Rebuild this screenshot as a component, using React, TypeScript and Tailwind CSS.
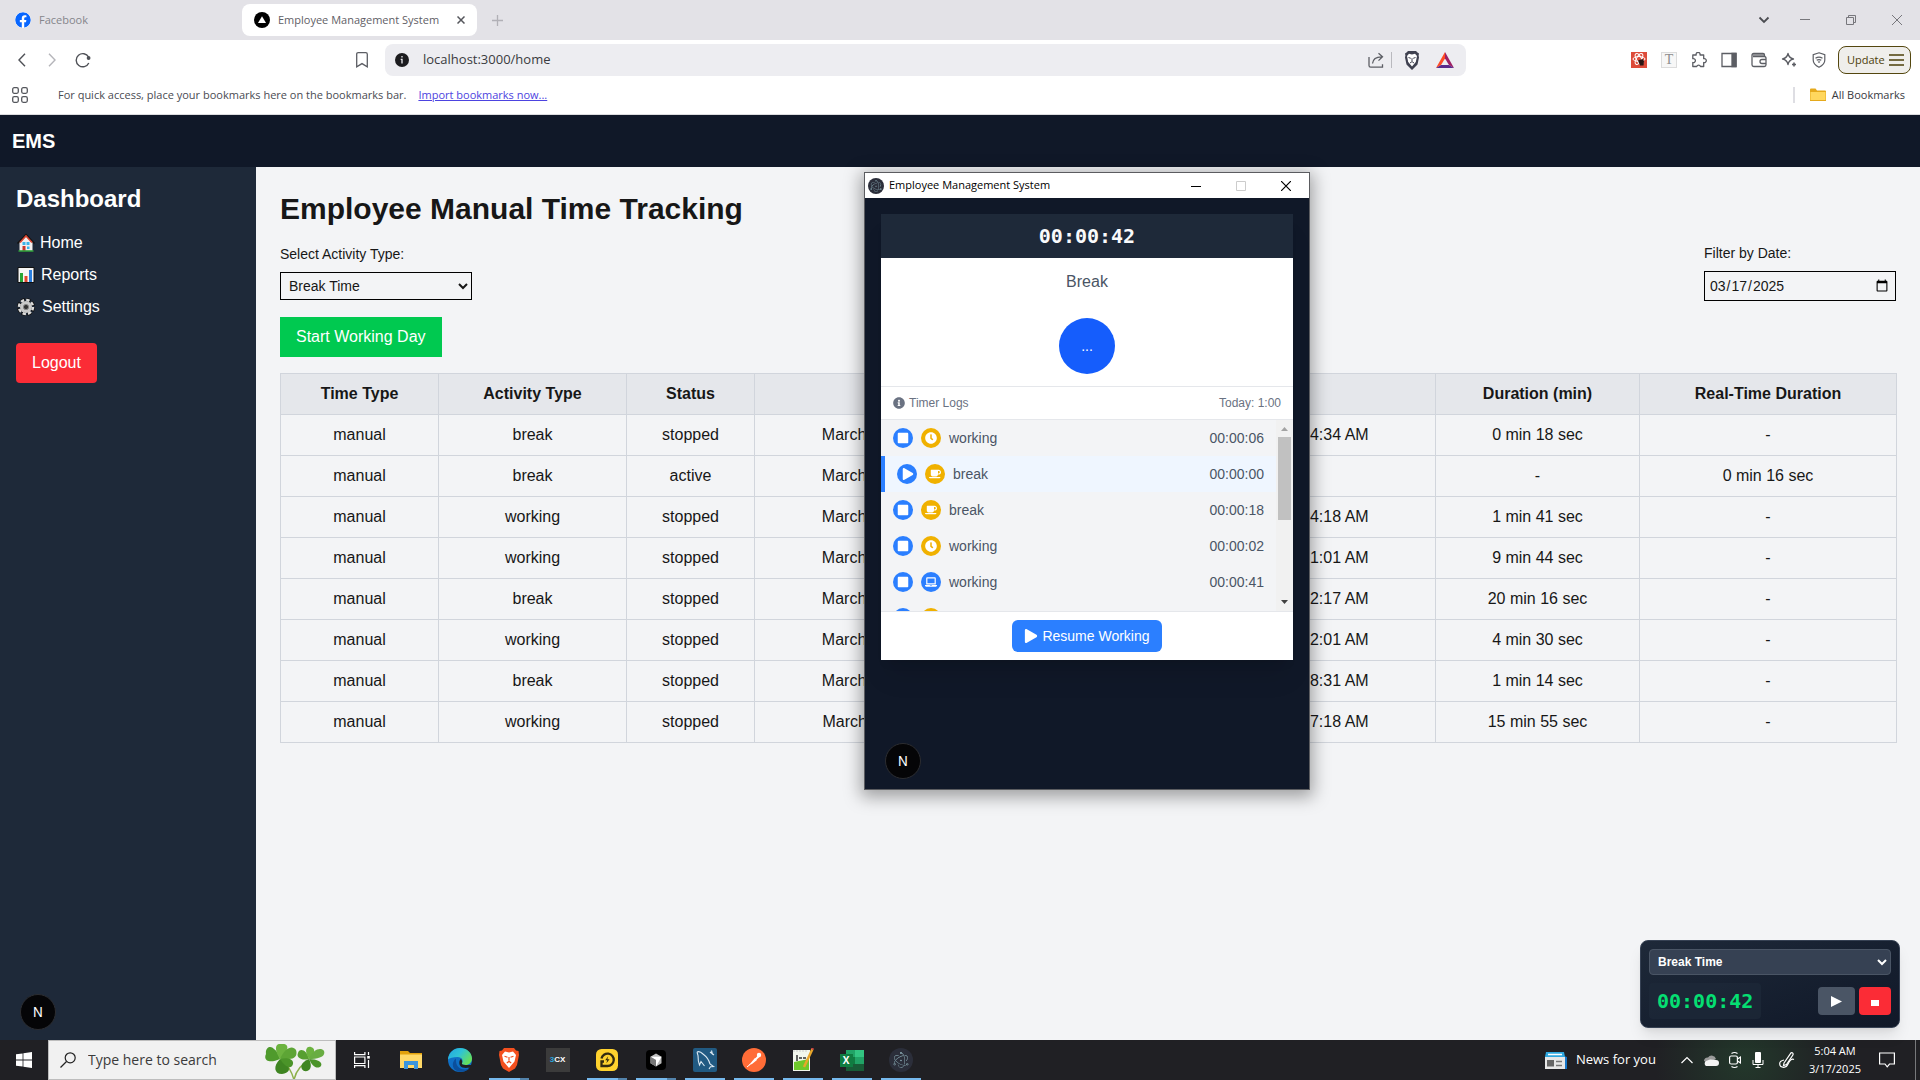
import React from "react";
import {
  FaCoffee,
  FaClock,
  FaFacebook,
  FaInfoCircle,
  FaLaptop,
  FaPlay,
  FaStop,
} from "react-icons/fa";
import { SiElectron } from "react-icons/si";

/* ---------- browser chrome ---------- */

function TabStrip() {
  return (
    <div className="flex h-10 items-center bg-[#e3e2e7] text-[11px] text-[#5f6066]">
      <button className="ml-[15px] flex w-[227px] items-center gap-2 text-[#85858b]">
        <FaFacebook className="size-4 rounded-full bg-white text-[#0866ff]" />
        Facebook
      </button>
      <div className="flex h-8 w-[235px] items-center gap-2 rounded-lg bg-white pl-3 pr-2">
        <svg viewBox="0 0 16 16" className="size-4 shrink-0">
          <circle cx="8" cy="8" r="8" fill="#000" />
          <path d="M8 4.2 12 11H4Z" fill="#fff" />
        </svg>
        <span className="grow whitespace-nowrap">Employee Management System</span>
        <button aria-label="Close tab" className="p-1">
          <svg viewBox="0 0 8 8" className="size-2" fill="none" stroke="#55565c" strokeWidth="1.5">
            <path d="M.5.5l7 7M7.5.5l-7 7" />
          </svg>
        </button>
      </div>
      <button aria-label="New tab" className="ml-[15px]">
        <svg viewBox="0 0 11 11" className="size-[11px]" stroke="#b1b0b6" strokeWidth="1.3">
          <path d="M5.5 0v11M0 5.5h11" />
        </svg>
      </button>
      <div className="ml-auto flex items-center text-[#77777c]">
        <button aria-label="Search tabs" className="flex w-9 justify-center">
          <svg viewBox="0 0 12 8" className="h-2 w-3" fill="none" stroke="#4b4c51" strokeWidth="1.8">
            <path d="M1.5 1.5 6 6l4.500-4.500" />
          </svg>
        </button>
        <button aria-label="Minimize" className="flex w-[46px] justify-center">
          <svg viewBox="0 0 10 10" className="size-[10px]" stroke="currentColor">
            <path d="M0 4.500h10" />
          </svg>
        </button>
        <button aria-label="Restore" className="flex w-[46px] justify-center">
          <svg viewBox="0 0 10 10" className="size-[10px]" fill="none" stroke="currentColor">
            <path d="M.5 2.500h7v7h-7zM2.500 2.500v-2h7v7h-2" />
          </svg>
        </button>
        <button aria-label="Close" className="flex w-[46px] justify-center">
          <svg viewBox="0 0 10 10" className="size-[10px]" stroke="currentColor">
            <path d="M0 0l10 10M10 0 0 10" />
          </svg>
        </button>
      </div>
    </div>
  );
}

function ShieldLion() {
  return (
    <svg viewBox="0 0 16 19" className="h-[19px] w-4">
      <path d="M4 0h8l1.500 1.500 1.500 1-.4 2L15 6.500l-1.500 7L8 19l-5.500-5.500L1 6.500l.4-2-.4-2 1.500-1Z" fill="#3f4150" />
      <path d="M3 5 5 2.800l3 .7 3-.7L13 5l-1.200 6L8 15.500 4.200 11Z" fill="#fff" />
      <path d="M4.500 6.500l2.300.8M11.500 6.500l-2.300.8M8 7.200v3M6 12l2-1.400 2 1.400" stroke="#3f4150" fill="none" />
    </svg>
  );
}

function Toolbar() {
  return (
    <div className="flex h-10 items-center bg-white">
      <div className="ml-[15px] flex items-center gap-4">
        <button aria-label="Back">
          <svg viewBox="0 0 12 14" className="h-[14px] w-[14px]" fill="none" stroke="#4f5157" strokeWidth="1.400">
            <path d="M9 .8 3 7l6 6.200" />
          </svg>
        </button>
        <button aria-label="Forward">
          <svg viewBox="0 0 12 14" className="h-[14px] w-[14px]" fill="none" stroke="#b5b5ba" strokeWidth="1.400">
            <path d="M3 .8 9 7l-6 6.200" />
          </svg>
        </button>
        <button aria-label="Reload">
          <svg viewBox="0 0 16 16" className="size-4" fill="none" stroke="#4f5157" strokeWidth="1.400">
            <path d="M13.600 5A6.600 6.600 0 1 0 13.800 11" />
            <circle cx="13.600" cy="6" r="1.900" fill="#4f5157" stroke="none" />
          </svg>
        </button>
      </div>
      <button aria-label="Bookmark this page" className="ml-[264px]">
        <svg viewBox="0 0 14 16" className="h-4 w-[14px]" fill="none" stroke="#5c5e64" strokeWidth="1.300">
          <path d="M1.700 2.200q0-1.500 1.500-1.500h7.600q1.500 0 1.500 1.500v12.600L7 11.600l-5.300 3.200Z" />
        </svg>
      </button>
      <div className="ml-4 flex h-8 w-[1081px] shrink items-center rounded-lg bg-[#ededf1] pl-[10px]">
        <svg viewBox="0 0 14 14" className="size-[14px] shrink-0">
          <circle cx="7" cy="7" r="7" fill="#1c1c1f" />
          <path d="M7 3v1.500M5.700 6.300H7V10.500" stroke="#ededf1" strokeWidth="1.300" fill="none" />
        </svg>
        <input
          aria-label="Address"
          className="ml-[14px] min-w-0 grow bg-transparent text-[13px] text-[#3a3b40] outline-none"
          defaultValue="localhost:3000/home"
        />
        <button aria-label="Share" className="mr-[7px]">
          <svg viewBox="0 0 16 16" className="size-4" fill="none" stroke="#5c5e64" strokeWidth="1.300">
            <path d="M1 5v8.500q0 1.700 1.700 1.700H14.500v-3M4.500 11.500C5 7 8 4.800 13.500 4.800M10.500 1.200 14.500 4.800l-4 3.800" />
          </svg>
        </button>
        <span className="mr-3 h-4 w-px bg-[#b9b9be]" />
        <button aria-label="Brave Shields" className="mr-4">
          <ShieldLion />
        </button>
        <button aria-label="Brave Rewards" className="mr-3">
          <svg viewBox="0 0 18 16" className="h-4 w-[18px]">
            <path d="M9 0 0 16l5-3 4-6.500Z" fill="#ff4b24" />
            <path d="M9 0l9 16-5-3L9 6.500Z" fill="#9e1f63" />
            <path d="M0 16h18l-5-3H5Z" fill="#5b2a8c" />
          </svg>
        </button>
      </div>
      <div className="ml-auto mr-[9px] flex items-center">
        <div className="mr-[11px] flex items-center gap-[14px] text-[#5c5e64]">
          <button aria-label="React extension">
            <svg viewBox="0 0 16 16" className="size-4">
              <path d="M0 0h16v16H0z" fill="#dd4b39" />
              <g fill="none" stroke="#fff">
                <ellipse cx="8" cy="7" rx="6" ry="2.500" />
                <ellipse cx="8" cy="7" rx="6" ry="2.500" transform="rotate(60 8 7)" />
                <ellipse cx="8" cy="7" rx="6" ry="2.500" transform="rotate(120 8 7)" />
              </g>
              <path d="M7 8.500l4.500-1.500L13 9l-.5 4.500H9Z" fill="#2a1512" />
            </svg>
          </button>
          <button
            aria-label="Text extension"
            className="flex size-4 items-center justify-center border border-[#dcdcdc] bg-[#f7f7f7] font-['Liberation_Serif'] text-sm leading-none text-[#8d8d8d]"
          >
            T
          </button>
          <button aria-label="Extensions">
            <svg viewBox="0 0 16 16" className="size-4" fill="none" stroke="currentColor" strokeWidth="1.300">
              <path d="M1.800 3h3.400a2 2 0 1 1 3.800 0h3.700v3.700a2 2 0 1 1 0 3.800v4H9.500a2 2 0 0 0-3.800 0H1.800v-4a2 2 0 1 0 0-3.800Z" strokeLinejoin="round" />
            </svg>
          </button>
          <button aria-label="Sidebar">
            <svg viewBox="0 0 16 16" className="size-4" fill="none" stroke="currentColor" strokeWidth="1.300">
              <path d="M1 1.500h14v13H1z" />
              <path d="M11 1.500h4v13h-4z" fill="currentColor" />
            </svg>
          </button>
          <button aria-label="Wallet">
            <svg viewBox="0 0 16 16" className="size-4" fill="none" stroke="currentColor" strokeWidth="1.300">
              <path d="M1 3.200Q1 1.500 2.700 1.500H12q1.500 0 1.500 1.500v1.500H2.700M1 3v9.800q0 1.700 1.700 1.700h10.600q1.700 0 1.700-1.700V6.200q0-1.700-1.700-1.700H2" />
              <path d="M15 7.500h-4a2 2 0 0 0 0 4h4" />
              <path d="M1.500 3h12" strokeWidth="2" strokeOpacity=".6" />
            </svg>
          </button>
          <button aria-label="Leo AI">
            <svg viewBox="0 0 16 16" className="size-4" fill="none" stroke="currentColor" strokeWidth="1.300">
              <path d="M7 1.500c.7 3.500 2 4.800 5.500 5.500C9 7.700 7.700 9 7 12.500 6.300 9 5 7.700 1.500 7 5 6.300 6.300 5 7 1.500Z" strokeLinejoin="round" />
              <path d="M13 10.500v4M11 12.500h4" strokeWidth="1.600" />
            </svg>
          </button>
          <button aria-label="VPN">
            <svg viewBox="0 0 16 16" className="size-4" fill="none" stroke="currentColor" strokeWidth="1.200">
              <path d="M8 .8l5.800 2v5.200c0 3.500-2.500 5.700-5.800 7.300C4.700 13.700 2.200 11.500 2.200 8V2.800Z" />
              <path d="M4.500 6.200q3.500-2.300 7 0M5.700 8.300q2.300-1.500 4.600 0M7 10.200q1-.7 2 0" />
            </svg>
          </button>
        </div>
        <button className="flex h-7 w-[73px] items-center justify-between rounded-lg border border-[#54470f] bg-[#efeeeb] pl-2 pr-[6px] text-[11px] text-[#4d400a]">
          Update
          <svg viewBox="0 0 15 12" className="h-3 w-[15px]" stroke="#4d400a" strokeWidth="1.300">
            <path d="M0 1h15M0 6h15M0 11h15" />
          </svg>
        </button>
      </div>
    </div>
  );
}

function BookmarksBar() {
  return (
    <div className="flex h-[35px] items-center border-b border-[#dcdcdf] bg-white pb-1 text-[11px] text-[#4a4b52]">
      <button aria-label="Tab groups" className="ml-3">
        <svg viewBox="0 0 16 16" className="size-4" fill="none" stroke="#55575d" strokeWidth="1.300">
          <rect x=".7" y=".7" width="5.600" height="5.600" rx="1.500" />
          <rect x="9.700" y=".7" width="5.600" height="5.600" rx="1.500" />
          <rect x=".7" y="9.700" width="5.600" height="5.600" rx="1.500" />
          <rect x="9.700" y="9.700" width="5.600" height="5.600" rx="1.500" />
        </svg>
      </button>
      <span className="ml-[30px]">For quick access, place your bookmarks here on the bookmarks bar.</span>
      <a href="#import" className="ml-3 text-[#4c43e0] underline">
        Import bookmarks now...
      </a>
      <span className="ml-auto mr-[15px] h-4 w-[2px] bg-[#dedee3]" />
      <button className="mr-[15px] flex items-center gap-[6px] text-[#38393e]">
        <svg viewBox="0 0 16 14" className="h-[14px] w-4">
          <path d="M0 1.500Q0 .5 1 .5h4.500l1.500 2h8q1 0 1 1V13H0Z" fill="#e5a91c" />
          <path d="M.5 4h15v8H.5z" fill="#ffd75e" />
        </svg>
        All Bookmarks
      </button>
    </div>
  );
}

/* ---------- page ---------- */

function NextBadge() {
  return (
    <button
      aria-label="Open Next.js Dev Tools"
      className="flex size-9 items-center justify-center rounded-full border border-[#2c2d31] bg-[#050507] font-[Inter] text-[13px] leading-none text-white"
    >
      N
    </button>
  );
}

function Sidebar() {
  return (
    <aside className="flex w-64 shrink-0 flex-col items-start bg-[#1e2939] px-4 pb-[10px] pt-4 text-white">
      <h2 className="text-2xl font-bold">Dashboard</h2>
      <nav className="mt-4 flex flex-col gap-2">
        <a href="#home" className="flex items-center gap-1">
          <svg viewBox="0 0 20 20" className="size-5">
            <path d="M3.500 18V9L10 2l6.500 7v9Z" fill="#f4efee" />
            <path d="M1.500 10.500 10 1.500l8.500 9" fill="none" stroke="#111" strokeWidth="1.500" />
            <path d="M4 9.500 10 3l6 6.500" fill="none" stroke="#d8432f" strokeWidth="1.600" />
            <path d="M6.500 9h3v3h-3zM10.500 9h3v3h-3zM11 13.500h2.500V16H11z" fill="#3bb4e8" />
            <path d="M6.500 13h3v5h-3z" fill="#c8372a" />
            <path d="M2.500 18h15" stroke="#2f9e3a" strokeWidth="1.600" />
          </svg>
          Home
        </a>
        <a href="#reports" className="flex items-center gap-[5px]">
          <svg viewBox="0 0 20 20" className="size-5">
            <path d="M2 2.500h16v15H2z" fill="#f5f5f5" stroke="#111" />
            <path d="M4 8h3v9H4z" fill="#27a536" />
            <path d="M8.500 11h3v6h-3z" fill="#e2462f" />
            <path d="M13 5h3v12h-3z" fill="#2a7fe0" />
          </svg>
          Reports
        </a>
        <a href="#settings" className="flex items-center gap-[6px]">
          <svg viewBox="0 0 20 20" className="size-5">
            <circle cx="10" cy="10" r="7" fill="none" stroke="#111" strokeWidth="4" strokeDasharray="4.200 1.298" />
            <circle cx="10" cy="10" r="7" fill="none" stroke="#dcdcdc" strokeWidth="2.500" strokeDasharray="3.400 2.098" />
            <circle cx="10" cy="10" r="6" fill="#c9c9c9" />
            <circle cx="10" cy="10" r="2.600" fill="#333" stroke="#888" />
          </svg>
          Settings
        </a>
      </nav>
      <button className="mt-6 rounded bg-[#fb2c36] px-4 py-2">Logout</button>
      <div className="ml-1 mt-auto">
        <NextBadge />
      </div>
    </aside>
  );
}

const rows = [
  ["break", "stopped", "5:04:16 AM", "5:04:34 AM", "0 min 18 sec", "-"],
  ["break", "active", "5:04:34 AM", "", "-", "0 min 16 sec"],
  ["working", "stopped", "5:02:37 AM", "5:04:18 AM", "1 min 41 sec", "-"],
  ["working", "stopped", "4:51:17 AM", "5:01:01 AM", "9 min 44 sec", "-"],
  ["break", "stopped", "4:32:01 AM", "4:52:17 AM", "20 min 16 sec", "-"],
  ["working", "stopped", "4:27:31 AM", "4:32:01 AM", "4 min 30 sec", "-"],
  ["break", "stopped", "4:27:17 AM", "4:28:31 AM", "1 min 14 sec", "-"],
  ["working", "stopped", "4:11:23 AM", "4:27:18 AM", "15 min 55 sec", "-"],
];

const cell = "h-[41px] border border-[#d1d5dc] text-center";

function LogTable() {
  return (
    <table className="mt-4 w-full table-fixed border-collapse text-base">
      <colgroup>
        <col className="w-[158px]" />
        <col className="w-[188px]" />
        <col className="w-[128px]" />
        <col className="w-[341px]" />
        <col className="w-[340px]" />
        <col className="w-[204px]" />
        <col className="w-[257px]" />
      </colgroup>
      <thead>
        <tr className="bg-[#e5e7eb]">
          {["Time Type", "Activity Type", "Status", "Start Time", "End Time", "Duration (min)", "Real-Time Duration"].map((h) => (
            <th key={h} className={cell + " font-bold"}>
              {h}
            </th>
          ))}
        </tr>
      </thead>
      <tbody>
        {rows.map((r, i) => (
          <tr key={i}>
            <td className={cell}>manual</td>
            <td className={cell}>{r[0]}</td>
            <td className={cell}>{r[1]}</td>
            <td className={cell}>{`March 17, 2025 - ${r[2]}`}</td>
            <td className={cell}>{r[3] ? `March 17, 2025 - ${r[3]}` : "-"}</td>
            <td className={cell}>{r[4]}</td>
            <td className={cell}>{r[5]}</td>
          </tr>
        ))}
      </tbody>
    </table>
  );
}

function MainPanel() {
  return (
    <main className="min-w-0 grow bg-[#f3f4f6] p-6 text-[#171717]">
      <h1 className="text-3xl font-bold">Employee Manual Time Tracking</h1>
      <div className="mt-4 flex items-start justify-between">
        <div className="flex flex-col items-start pt-px">
          <label htmlFor="activity" className="text-sm">
            Select Activity Type:
          </label>
          <select id="activity" className="mt-2 h-7 w-48 border border-black px-1 text-sm">
            <option>Break Time</option>
            <option>Working Time</option>
          </select>
          <button className="mt-[17px] bg-[#00c950] px-4 py-2 text-white">Start Working Day</button>
        </div>
        <div className="flex flex-col">
          <label htmlFor="filter-date" className="text-sm">
            Filter by Date:
          </label>
          <input id="filter-date" type="date" defaultValue="2025-03-17" className="mt-2 h-[30px] w-48 border border-black px-1 text-sm" />
        </div>
      </div>
      <LogTable />
    </main>
  );
}

function TimerWidget() {
  return (
    <section className="absolute bottom-3 right-5 w-[260px] rounded-lg border border-[#364153] bg-linear-to-br from-[#1e2939] to-[#101828] p-2 shadow-lg">
      <select
        aria-label="Timer activity"
        className="block h-[26px] w-full rounded border border-[#4a5565] bg-[#364153] px-1 text-xs font-bold text-white"
      >
        <option>Break Time</option>
        <option>Working Time</option>
      </select>
      <div className="mt-2 flex items-center">
        <span className="rounded bg-[#1e2939]/70 px-2 py-1 font-['DejaVu_Sans_Mono',monospace] text-xl font-bold text-[#05df72]">
          00:00:42
        </span>
        <button aria-label="Play" className="ml-auto flex h-7 w-[37px] items-center justify-center rounded bg-[#4a5565]">
          <svg viewBox="0 0 11 11" className="size-[11px]" fill="#fff">
            <path d="M0 0l11 5.500L0 11Z" />
          </svg>
        </button>
        <button aria-label="Stop" className="ml-1 flex h-7 w-8 items-center justify-center rounded bg-[#fb2c36] pt-1">
          <span className="h-[6px] w-2 bg-white" />
        </button>
      </div>
    </section>
  );
}

/* ---------- desktop timer window ---------- */

type Log = { active?: boolean; icon: "clock" | "cup" | "laptop"; name?: string; time?: string };

const logs: Log[] = [
  { icon: "clock", name: "working", time: "00:00:06" },
  { active: true, icon: "cup", name: "break", time: "00:00:00" },
  { icon: "cup", name: "break", time: "00:00:18" },
  { icon: "clock", name: "working", time: "00:00:02" },
  { icon: "laptop", name: "working", time: "00:00:41" },
  { icon: "cup" },
];

function LogRow({ log }: { log: Log }) {
  return (
    <li
      className={
        "flex h-9 shrink-0 items-center px-3 text-sm text-[#4a5565] " + (log.active ? "border-l-4 border-[#2b7fff] bg-[#eff6ff]" : "")
      }
    >
      <span className="flex size-5 items-center justify-center rounded-full bg-[#2b7fff] text-white">
        {log.active ? <FaPlay className="ml-px size-3" /> : <FaStop className="size-3" />}
      </span>
      <span
        className={
          "ml-2 mr-2 flex size-5 items-center justify-center rounded-full text-white " +
          (log.icon === "laptop" ? "bg-[#2b7fff]" : "bg-[#f0b100]")
        }
      >
        {log.icon === "clock" && <FaClock className="size-3" />}
        {log.icon === "cup" && <FaCoffee className="size-3" />}
        {log.icon === "laptop" && <FaLaptop className="size-3" />}
      </span>
      {log.name}
      {log.time && <span className="ml-auto">{log.time}</span>}
    </li>
  );
}

function TimerWindow() {
  return (
    <section className="absolute left-[864px] top-[172px] flex h-[618px] w-[446px] flex-col border border-[#5b5c60] bg-[#101828] shadow-[0_4px_16px_3px_rgba(0,0,0,0.35)]">
      <header className="flex h-[25px] shrink-0 items-center bg-white pl-[3px] font-['Open_Sans',sans-serif] text-[11px] text-black">
        <span className="mr-[5px] flex size-4 items-center justify-center rounded-full bg-[#2b2e3a]">
          <SiElectron className="size-3 text-[#9fc5ce]" />
        </span>
        Employee Management System
        <div className="ml-auto flex">
          <button aria-label="Minimize window" className="flex w-[45px] justify-center">
            <svg viewBox="0 0 10 10" className="size-[10px]" stroke="#000">
              <path d="M0 5.500h10" />
            </svg>
          </button>
          <button aria-label="Maximize window" className="flex w-[45px] justify-center">
            <svg viewBox="0 0 10 10" className="size-[10px]" fill="none" stroke="#ccc">
              <path d="M.5.500h9v9h-9z" />
            </svg>
          </button>
          <button aria-label="Close window" className="flex w-[46px] justify-center">
            <svg viewBox="0 0 10 10" className="size-[10px]" stroke="#000" strokeWidth="1.200">
              <path d="M0 0l10 10M10 0 0 10" />
            </svg>
          </button>
        </div>
      </header>
      <div className="mx-4 mt-4 flex flex-col bg-white shadow-xl">
        <div className="flex h-11 items-center justify-center bg-[#1e2939] font-['DejaVu_Sans_Mono',monospace] text-xl font-bold text-[#f9fafb]">
          00:00:42
        </div>
        <div className="flex h-32 flex-col items-center pt-3 text-[#4a5565]">
          Break
          <button className="mt-6 size-14 rounded-full bg-[#155dfc] text-sm text-white">...</button>
        </div>
        <div className="flex h-[34px] items-center border-y border-[#e5e7eb] px-3 text-xs text-[#6a7282]">
          <FaInfoCircle className="mr-1 size-3" />
          Timer Logs
          <span className="ml-auto">Today: 1:00</span>
        </div>
        <div className="flex h-[191px] overflow-hidden bg-[#f3f4f6]">
          <ul className="flex grow flex-col">
            {logs.map((l, i) => (
              <LogRow key={i} log={l} />
            ))}
          </ul>
          <div className="flex w-[17px] flex-col items-center bg-[#f1f1f1]">
            <svg viewBox="0 0 17 17" className="size-[17px]" fill="#a3a3a3">
              <path d="M5 11l3.500-4 3.500 4Z" />
            </svg>
            <div className="h-[83px] w-[13px] bg-[#c1c1c1]" />
            <svg viewBox="0 0 17 17" className="mt-auto size-[17px]" fill="#404040">
              <path d="M5 6l3.500 4L12 6Z" />
            </svg>
          </div>
        </div>
        <div className="flex h-[49px] items-center justify-center border-t border-[#e5e7eb]">
          <button className="flex h-8 items-center gap-1 rounded-md bg-[#2b7fff] px-3 text-sm font-medium text-white">
            <FaPlay className="size-[14px]" />
            <span>Resume Working</span>
          </button>
        </div>
      </div>
      <div className="mb-[10px] ml-5 mt-auto">
        <NextBadge />
      </div>
    </section>
  );
}

/* ---------- taskbar ---------- */

function Clover() {
  return (
    <svg viewBox="0 0 60 36" className="h-9 w-[60px]">
      <path d="M17 16q9 8 12 20M44 17Q32 22 29 36" fill="none" stroke="#8db04a" strokeWidth="1.500" />
      <g fill="#4f9a2c">
        <path d="M15 15C4 20-2 16 1 10 0 3 6 1 9 5 12 7 14 11 15 15Z" />
        <path d="M15 15C9 6 10-1 16 0c6-1 8 3 5 7-1 4-4 6-6 8Z" fill="#6cb33f" />
        <path d="M15 15C20 3 28 1 31 6c2 6-2 9-7 9Z" fill="#5da535" />
        <path d="M15 15C8 22 9 30 17 30c7-1 9-5 5-9-1-3-4-5-7-6Z" fill="#3f8522" />
        <path d="M15 15c7-2 14 0 13 5-2 6-8 3-13-5Z" fill="#4b9429" />
      </g>
      <g fill="#579f31">
        <path d="M44 15C36 17 31 13 33 9c1-5 9-4 11 6Z" />
        <path d="M44 15C39 7 41 2 46 3c5 1 4 8-2 12Z" fill="#6cb33f" />
        <path d="M44 15C48 5 56 3 59 7c2 6-6 8-15 8Z" fill="#69ad42" />
        <path d="M44 15c8 0 14 3 12 7-4 4-9 0-12-7Z" fill="#4b9429" />
        <path d="M44 15c-8 3-10 9-5 12 6 1 9-4 5-12Z" fill="#3f8522" />
      </g>
    </svg>
  );
}

function TaskItem({ label, state, children }: { label: string; state?: "one" | "many"; children: React.ReactNode }) {
  return (
    <button aria-label={label} className="flex h-10 w-[49px] flex-col items-center">
      <span className="flex h-[38px] items-center justify-center pt-[2px]">{children}</span>
      {state && (
        <span className="flex h-[2px] w-10 bg-[#76b9ed]">{state === "many" && <span className="ml-auto w-[9px] bg-[#5383ab]" />}</span>
      )}
    </button>
  );
}

function Taskbar() {
  return (
    <footer className="flex h-10 items-center bg-[#202024] bg-[radial-gradient(circle_at_1745px_20px,#23382b_0,#202024_90px)] text-white">
      <button aria-label="Start" className="flex w-12 justify-center">
        <svg viewBox="0 0 16 16" className="size-4" fill="#fff">
          <path d="M0 2.300 6.600 1.400v6.200H0zM7.400 1.300 16 0v7.600H7.400zM0 8.400h6.600v6.200L0 13.700zM7.400 8.400H16V16l-8.600-1.300z" />
        </svg>
      </button>
      <label className="flex h-10 w-72 items-center overflow-hidden border border-[#bdbdbd] bg-[#f1f1f1] pl-[11px]">
        <svg viewBox="0 0 16 16" className="size-4 shrink-0" fill="none" stroke="#222" strokeWidth="1.200">
          <circle cx="10.200" cy="5.800" r="5" />
          <path d="M6.500 9.500.5 15.500" />
        </svg>
        <input
          aria-label="Type here to search"
          placeholder="Type here to search"
          className="ml-3 min-w-0 grow bg-transparent text-sm outline-none placeholder:text-[#3b3b3b]"
        />
        <span className="mr-[10px] pt-1">
          <Clover />
        </span>
      </label>
      <div className="ml-px flex">
        <TaskItem label="Task View">
          <svg viewBox="0 0 16 16" className="size-4" fill="none" stroke="#fff" strokeWidth="1.200">
            <path d="M.6 0v2.600h10.300V0M.6 5h10.300v6.500H.6zM.6 16v-2.400h10.300V16M14.500 0v3M14.500 8v8" />
            <path d="M13.200 4h2.600v2.600h-2.600z" fill="#fff" stroke="none" />
          </svg>
        </TaskItem>
        <TaskItem label="File Explorer">
          <svg viewBox="0 0 22 18" className="h-[18px] w-[22px]">
            <path d="M0 0h8l2 2h12v15H0Z" fill="#e2a10c" />
            <path d="M0 3.500h22V17H0z" fill="#ffd968" />
            <path d="M4 10h14v8h-4v-4H8v4H4z" fill="#3a95dd" />
          </svg>
        </TaskItem>
        <TaskItem label="Edge">
          <svg viewBox="0 0 24 24" className="size-6">
            <defs>
              <linearGradient id="edgeTop" x1="0" y1="0" x2="1" y2=".6">
                <stop offset="0" stopColor="#22a6e0" />
                <stop offset=".5" stopColor="#2fc3d6" />
                <stop offset="1" stopColor="#66e05a" />
              </linearGradient>
            </defs>
            <circle cx="12" cy="12" r="12" fill="#0f6fc5" />
            <path d="M0 11.500C.5 4.500 6 0 12 0c7 0 12 5 12 10.500 0 4-3 6.500-6.500 6.500-3 0-4-1-3.500-2 1.500-2 .5-6-4.500-6C5 9 1.500 10 0 11.500Z" fill="url(#edgeTop)" />
            <path d="M8 13c0 5 4 8.500 9 8.500 2 0 4-.8 5-1.700C19 24 12 25 8 22.500 4 20 3.500 14 8 10.500 7.800 11 8 12 8 13Z" fill="#0b4f9c" />
            <path d="M14 15c-.5 1 .5 2 3.500 2l6 0-.5 2c-2 1-9 2-11-1.500C11 16 11 12 13 11c1 1 1.500 3 1 4Z" fill="#202024" />
          </svg>
        </TaskItem>
        <TaskItem label="Brave" state="many">
          <svg viewBox="0 0 20 24" className="h-6 w-5">
            <path d="M5 0h10l2 2.500 2.500.5.500 4-2 10-2 3.500L10 24l-6-3.500L2 17 0 7l.5-4L3 2.500Z" fill="#f4501f" />
            <path d="M3 7l3-3.500 4 1 4-1L17 7l-1.500 6.500L10 20l-5.500-6.500Z" fill="#fff" />
            <path d="M5.500 8.200l3 1M14.500 8.200l-3 1M10 9v3.500M7.800 15l2.200-1.700 2.200 1.700" stroke="#f4501f" strokeWidth="1.200" fill="none" />
          </svg>
        </TaskItem>
        <TaskItem label="3CX">
          <span className="flex size-6 items-center justify-center bg-[#3b3b3b] font-['Liberation_Sans',sans-serif] text-[8px] font-bold">
            <span className="text-[#2ba5dc]">3</span>CX
          </span>
        </TaskItem>
        <TaskItem label="LDPlayer" state="many">
          <svg viewBox="0 0 22 22" className="size-[22px]">
            <rect width="22" height="22" rx="5.500" fill="#ffd22e" />
            <path d="M5.500 9.500A6.200 6.200 0 1 1 11.500 17H5.500v-4.500H8" fill="none" stroke="#332a10" strokeWidth="2.300" />
            <path d="M12.200 7.200 9.200 11.300h2l-.8 3 3.200-4.100h-2.200Z" fill="#332a10" />
          </svg>
        </TaskItem>
        <TaskItem label="Cursor" state="many">
          <svg viewBox="0 0 20 20" className="size-5">
            <rect width="20" height="20" rx="4" fill="#000" />
            <path d="M10 3.500 15.500 6.700v6.600L10 16.500l-5.500-3.200V6.700Z" fill="#bbb" />
            <path d="M4.500 6.700h11L10 16.500V10Z" fill="#fff" />
            <path d="M4.500 6.700 10 10v6.500l-5.500-3.200Z" fill="#777" />
          </svg>
        </TaskItem>
        <TaskItem label="MySQL Workbench" state="one">
          <svg viewBox="0 0 24 24" className="size-6" fill="none" stroke="#dce9f2" strokeWidth="1.100">
            <rect width="24" height="24" rx="2" fill="#215a82" stroke="none" />
            <path d="M4 4c2-1 4 0 6 2 4 3 6 6 7 10l3.500 2.500-3 .2-1.500 2.300M4 4l1 3.500c0 3 0 6 1.500 9.500l1.500-3.500 3.500 4.500M17 4l4 3M18.500 2.500l1 4" />
          </svg>
        </TaskItem>
        <TaskItem label="Postman" state="one">
          <svg viewBox="0 0 24 24" className="size-6">
            <circle cx="12" cy="12" r="12" fill="#ff6c37" />
            <path d="M6.500 17.500 13 10l2 2-5 4Z" fill="#fff" />
            <path d="M12 11.500l4-4 1.500 1.500-4.500 4Z" fill="#fff" />
            <circle cx="17" cy="7" r="2.200" fill="#fff" />
            <path d="M5 19l3-2.500" stroke="#fff" />
          </svg>
        </TaskItem>
        <TaskItem label="Notepad++" state="one">
          <svg viewBox="0 0 22 24" className="h-6 w-[22px]">
            <path d="M1 2h17v21H1z" fill="#f2f7ec" />
            <path d="M2 14l15-3v11H2Z" fill="#6ec82a" />
            <path d="M2 2v-2M5 2V0M8 2V0M11 2V0M14 2V0" stroke="#ccc" transform="translate(0 2)" />
            <path d="M5 7v6M7 10h3M11 10h3" stroke="#333" strokeWidth="1.500" />
            <path d="M20.500 1 12 19" stroke="#e8a62b" strokeWidth="2.500" />
            <path d="M20 1.500 21 0" stroke="#c44" strokeWidth="2.500" />
          </svg>
        </TaskItem>
        <TaskItem label="Excel" state="one">
          <span className="relative flex h-[21px] w-6 items-end">
            <svg viewBox="0 0 24 21" className="absolute inset-0">
              <path d="M6 0h9v7H6z" fill="#21a366" />
              <path d="M15 0h9v7h-9z" fill="#33c481" />
              <path d="M6 7h9v7H6z" fill="#107c41" />
              <path d="M15 7h9v7h-9z" fill="#21a366" />
              <path d="M6 14h18v7H6z" fill="#185c37" />
            </svg>
            <span className="relative mb-1 flex size-[13px] items-center justify-center bg-[#107c41] text-[10px] font-bold leading-none">X</span>
          </span>
        </TaskItem>
        <TaskItem label="Electron" state="one">
          <span className="flex size-6 items-center justify-center rounded-full bg-[#2b2e3a]">
            <SiElectron className="size-4 text-[#9fc5ce]" />
          </span>
        </TaskItem>
      </div>
      <div className="ml-auto flex h-10 items-center">
        <button className="flex items-center gap-[9px] text-[13px]">
          <svg viewBox="0 0 22 17" className="h-[17px] w-[22px]">
            <path d="M19 4l3 1v12h-3Z" fill="#1676c9" />
            <path d="M0 5h20v12H0z" fill="#e7e7e7" />
            <path d="M1 0h18l1 5H0z" fill="#2fa8e0" />
            <path d="M3 2.500h14" stroke="#fff" strokeWidth="1.500" />
            <path d="M2 8h7v6.500H2z" fill="#666" />
            <path d="M11 9.500h6M11 13.500h6" stroke="#777" strokeWidth="1.600" />
          </svg>
          News for you
        </button>
        <div className="ml-[25px] flex items-center">
          <button aria-label="Show hidden icons">
            <svg viewBox="0 0 12 8" className="h-2 w-3" fill="none" stroke="#fff" strokeWidth="1.200">
              <path d="M.5 7 6 1.500 11.500 7" />
            </svg>
          </button>
          <svg viewBox="0 0 16 11" className="ml-[10px] h-[11px] w-4">
            <path d="M1 6a3.500 3.500 0 0 1 4-3.500A4.500 4.500 0 0 1 13 4l-8 4Z" fill="#9a9a9a" />
            <path d="M3 11a3 3 0 0 1 0-5l4-1.500 6 .5a3 3 0 0 1 0 6Z" fill="#f3f3f3" />
          </svg>
          <svg viewBox="0 0 12 18" className="ml-[10px] h-[18px] w-3" fill="none" stroke="#fff" strokeWidth="1.200">
            <path d="M2.500 2.500Q5.500.5 8.500 2.500M2.500 15.500q3 2 6 0" />
            <rect x=".6" y="5" width="7.800" height="8" rx="1.500" />
            <path d="M8.500 8l3-2v6l-3-2" />
          </svg>
          <svg viewBox="0 0 12 16" className="ml-[11px] h-4 w-3">
            <rect x="3" y="0" width="6" height="11" rx="1" fill="#fff" />
            <path d="M1 8v4.500h10V8M6 12.500V15.500M3.500 15.500h5" fill="none" stroke="#fff" />
          </svg>
          <svg viewBox="0 0 16 16" className="ml-[15px] size-4" fill="none" stroke="#fff" strokeWidth="1.200">
            <path d="M5 11 12 .8q2.500-.5 2 2L7.500 12.500 4.500 13.500Z" />
            <path d="M5 8Q.5 9 .7 12q.3 3.300 4 3.300 3-.2 4.300-3.300 3-6 6-4.500" />
          </svg>
        </div>
        <div className="ml-[14px] text-right text-[11px] leading-[18px]">
          <div className="text-center">5:04 AM</div>
          <div>3/17/2025</div>
        </div>
        <button aria-label="Notifications" className="ml-[18px]">
          <svg viewBox="0 0 16 16" className="size-4" fill="none" stroke="#fff" strokeWidth="1.200">
            <path d="M.6 1h14.800v11H10.500L8.200 14.800 6 12H.6Z" />
          </svg>
        </button>
        <button aria-label="Show desktop" className="ml-5 h-10 w-[5px] border-l border-[#77787b]" />
      </div>
    </footer>
  );
}

export default function App() {
  return (
    <div className="relative flex min-h-screen flex-col overflow-hidden font-['Open_Sans',sans-serif]">
      <TabStrip />
      <Toolbar />
      <BookmarksBar />
      <div className="relative flex grow flex-col font-['Liberation_Sans',sans-serif]">
        <header className="bg-[#101828] p-3 text-xl font-bold text-white">EMS</header>
        <div className="flex grow">
          <Sidebar />
          <MainPanel />
        </div>
        <TimerWidget />
      </div>
      <Taskbar />
      <div className="font-['Liberation_Sans',sans-serif]">
        <TimerWindow />
      </div>
    </div>
  );
}
